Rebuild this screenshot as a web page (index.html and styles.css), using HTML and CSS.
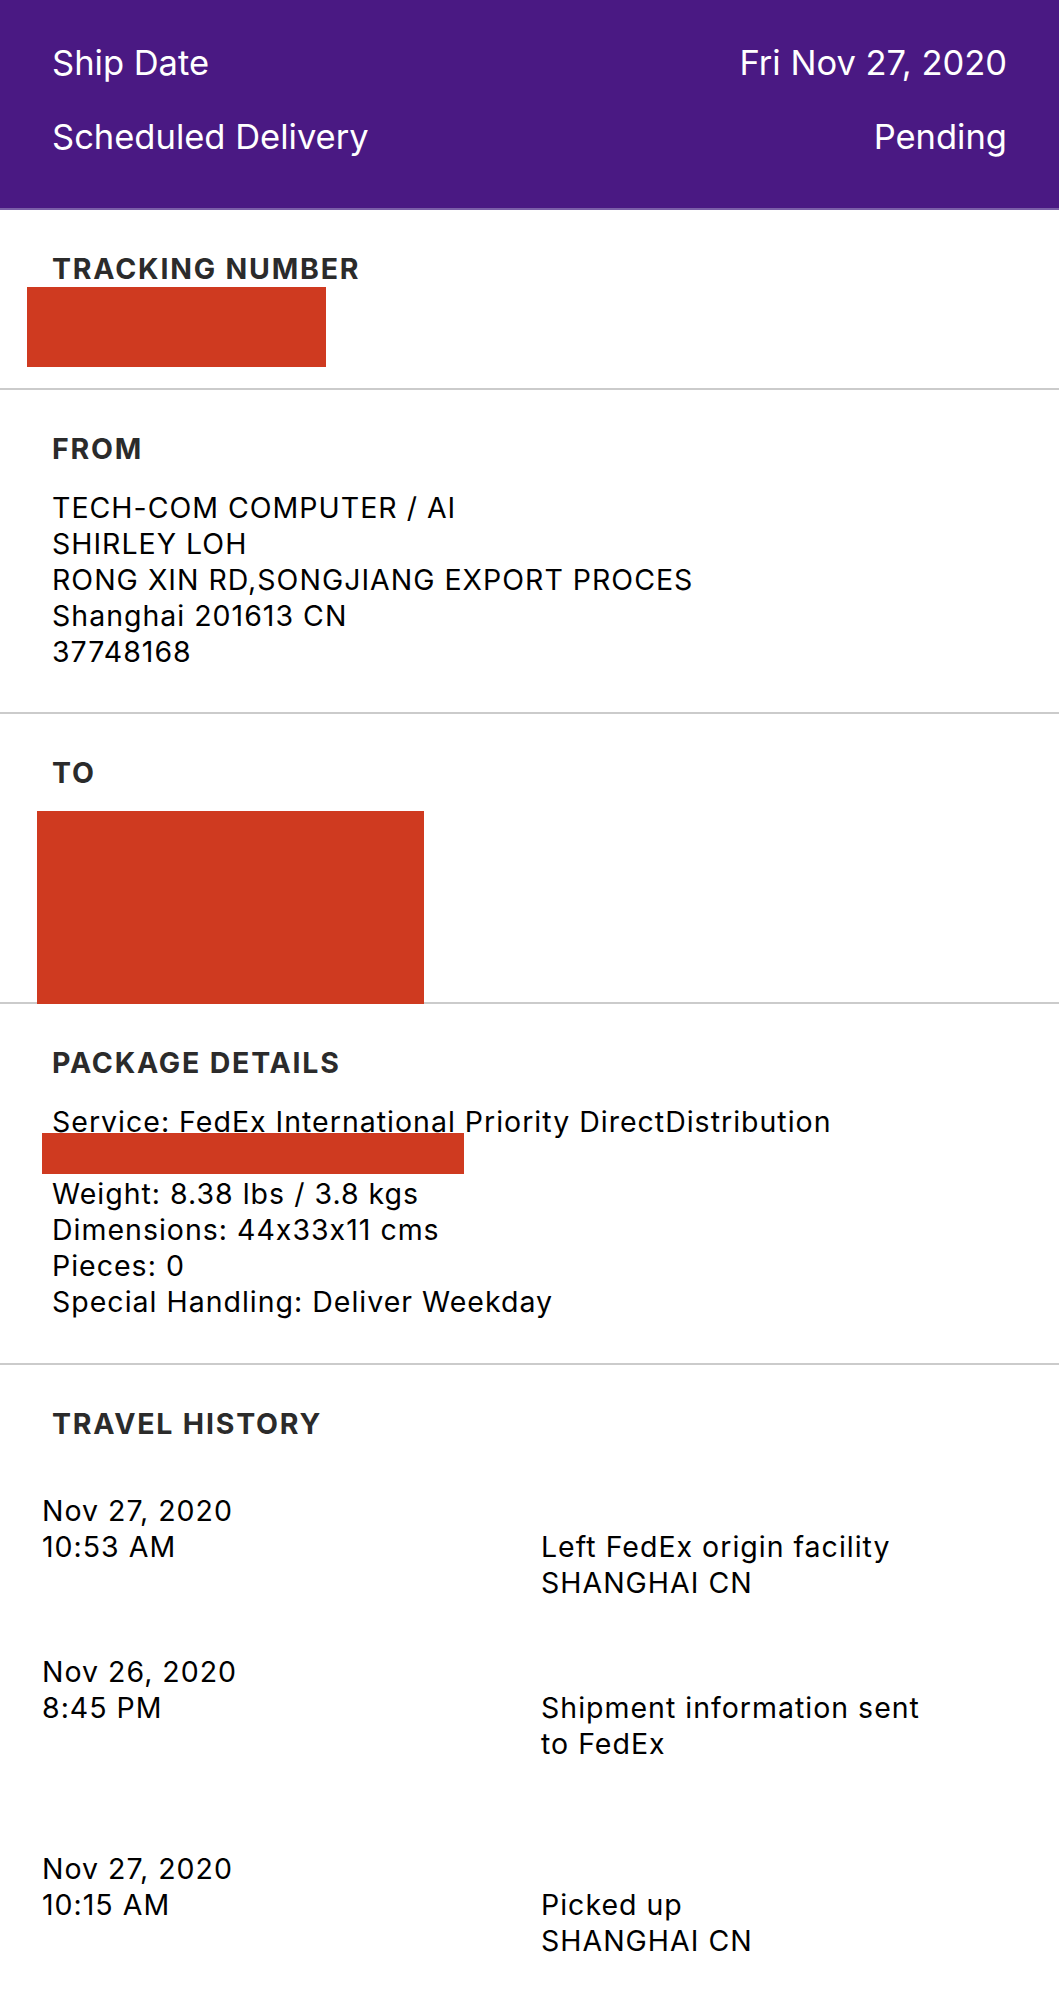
FILE: index.html
```html
<!DOCTYPE html>
<html lang="en">
<head>
    <meta charset="UTF-8">
    <meta name="viewport" content="width=device-width, initial-scale=1.0">
    <title>Shipment Details</title>
    <link rel="stylesheet" href="styles.css">
</head>
<body>
    <div class="summary">
        <div class="summary-row">
            <span>Ship Date</span>
            <span>Fri Nov 27, 2020</span>
        </div>
        <div class="summary-row">
            <span>Scheduled Delivery</span>
            <span>Pending</span>
        </div>
    </div>

    <div class="section section-tracking">
        <h3>TRACKING NUMBER</h3>
        <div class="redact redact-tracking"></div>
    </div>

    <div class="section">
        <h3>FROM</h3>
        <div class="lines">
            <div>TECH-COM COMPUTER / AI</div>
            <div>SHIRLEY LOH</div>
            <div>RONG XIN RD,SONGJIANG EXPORT PROCES</div>
            <div>Shanghai 201613 CN</div>
            <div>37748168</div>
        </div>
    </div>

    <div class="section section-to">
        <h3>TO</h3>
        <div class="redact redact-address"></div>
    </div>

    <div class="section section-package">
        <h3>PACKAGE DETAILS</h3>
        <div class="lines">
            <div>Service: FedEx International Priority DirectDistribution</div>
            <div class="redact-line"><div class="redact redact-bar"></div></div>
            <div>Weight: 8.38 lbs / 3.8 kgs</div>
            <div>Dimensions: 44x33x11 cms</div>
            <div>Pieces: 0</div>
            <div>Special Handling: Deliver Weekday</div>
        </div>
    </div>

    <div class="section section-history">
        <h3>TRAVEL HISTORY</h3>
        <div class="history">
            <div class="event">
                <div class="event-time">
                    <div>Nov 27, 2020</div>
                    <div>10:53 AM</div>
                </div>
                <div class="event-info">
                    <div>Left FedEx origin facility</div>
                    <div class="event-place">SHANGHAI CN</div>
                </div>
            </div>
            <div class="event">
                <div class="event-time">
                    <div>Nov 26, 2020</div>
                    <div>8:45 PM</div>
                </div>
                <div class="event-info">
                    <div>Shipment information sent to FedEx</div>
                    <div class="event-place"></div>
                </div>
            </div>
            <div class="event">
                <div class="event-time">
                    <div>Nov 27, 2020</div>
                    <div>10:15 AM</div>
                </div>
                <div class="event-info">
                    <div>Picked up</div>
                    <div class="event-place">SHANGHAI CN</div>
                </div>
            </div>
        </div>
    </div>
</body>
</html>
```

FILE: styles.css
```css
body {
    font-family: Inter, 'Liberation Sans', Arial, sans-serif;
    font-size: 28.5px;
    line-height: 36px;
    letter-spacing: 1px;
    font-feature-settings: "calt" 0;
    color: #000;
    margin: 0;
    padding: 0;
    background-color: #ffffff;
}

.summary {
    background-color: #4a1983;
    border-bottom: 2px solid #7b5fa8;
    color: #fff;
    height: 210px;
    box-sizing: border-box;
    padding: 42px 52px 0;
    font-size: 34.5px;
    letter-spacing: 0;
}

.summary-row {
    display: flex;
    justify-content: space-between;
    line-height: 42px;
    margin-bottom: 32px;
}

.section {
    padding: 41px 52px 42px;
    border-bottom: 2px solid #cbcbcb;
}

.section h3 {
    margin: 0 0 23px;
    font-size: 28.5px;
    line-height: 36px;
    font-weight: 700;
    letter-spacing: 1.8px;
    color: #2b2b2b;
}

.redact {
    background-color: #cf3a20;
}

.section-tracking {
    padding-bottom: 21px;
}

.section-tracking h3 {
    margin-bottom: 0;
}

.redact-tracking {
    width: 299px;
    height: 80px;
    margin-left: -25px;
}

.section-to {
    padding-bottom: 0;
}

.section-to h3 {
    margin-bottom: 20px;
}

.redact-address {
    width: 387px;
    height: 193px;
    margin-left: -15px;
    margin-bottom: -2px;
}

.section-package {
    padding-bottom: 43px;
}

.redact-line {
    height: 36px;
}

/* bar sits over the hidden line */
.redact-bar {
    position: relative;
    top: -7px;
    left: -10px;
    width: 422px;
    height: 41px;
}

.section-history {
    border-bottom: none;
}

.section-history h3 {
    margin-bottom: 51px;
}

.history {
    margin-left: -10px;
    display: flex;
    flex-direction: column;
    gap: 53px;
}

.event {
    display: grid;
    grid-template-columns: 499px 395px;
}

.event-info {
    padding-top: 36px;
}

.event-place {
    min-height: 36px;
}
```
